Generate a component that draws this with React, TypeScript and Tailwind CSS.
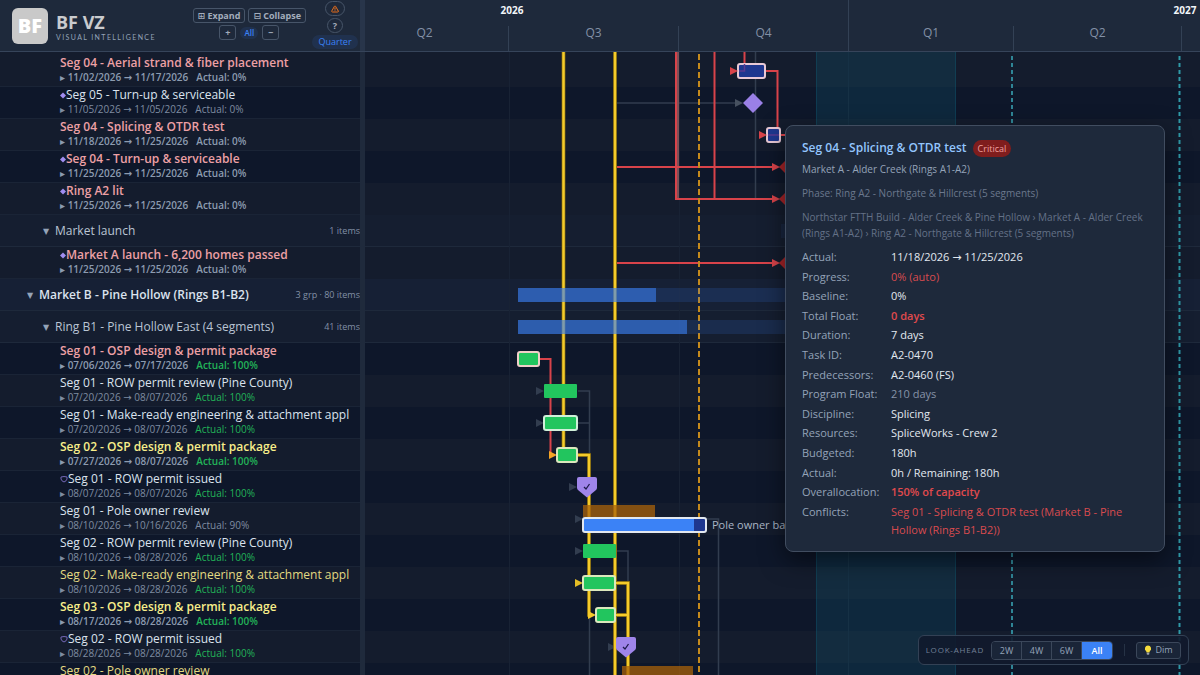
import clsx from 'clsx';
import { TriangleAlert } from 'lucide-react';

type Tone = 'critical' | 'normal' | 'driving' | 'drivingSoft';

interface TaskRow {
    kind: 'task';
    name: string;
    start: string;
    end: string;
    actual: number;
    tone?: Tone;
    mark?: 'milestone' | 'permit';
}

interface GroupRow {
    kind: 'group';
    name: string;
    count: string;
    level: 1 | 2;
}

type Row = TaskRow | GroupRow;

const rows: Row[] = [
    { kind: 'task', name: 'Seg 04 - Aerial strand & fiber placement', start: '11/02/2026', end: '11/17/2026', actual: 0, tone: 'critical' },
    { kind: 'task', name: 'Seg 05 - Turn-up & serviceable', start: '11/05/2026', end: '11/05/2026', actual: 0, mark: 'milestone' },
    { kind: 'task', name: 'Seg 04 - Splicing & OTDR test', start: '11/18/2026', end: '11/25/2026', actual: 0, tone: 'critical' },
    { kind: 'task', name: 'Seg 04 - Turn-up & serviceable', start: '11/25/2026', end: '11/25/2026', actual: 0, tone: 'critical', mark: 'milestone' },
    { kind: 'task', name: 'Ring A2 lit', start: '11/25/2026', end: '11/25/2026', actual: 0, tone: 'critical', mark: 'milestone' },
    { kind: 'group', name: 'Market launch', count: '1 items', level: 2 },
    { kind: 'task', name: 'Market A launch - 6,200 homes passed', start: '11/25/2026', end: '11/25/2026', actual: 0, tone: 'critical', mark: 'milestone' },
    { kind: 'group', name: 'Market B - Pine Hollow (Rings B1-B2)', count: '3 grp · 80 items', level: 1 },
    { kind: 'group', name: 'Ring B1 - Pine Hollow East (4 segments)', count: '41 items', level: 2 },
    { kind: 'task', name: 'Seg 01 - OSP design & permit package', start: '07/06/2026', end: '07/17/2026', actual: 100, tone: 'critical' },
    { kind: 'task', name: 'Seg 01 - ROW permit review (Pine County)', start: '07/20/2026', end: '08/07/2026', actual: 100 },
    { kind: 'task', name: 'Seg 01 - Make-ready engineering & attachment application', start: '07/20/2026', end: '08/07/2026', actual: 100 },
    { kind: 'task', name: 'Seg 02 - OSP design & permit package', start: '07/27/2026', end: '08/07/2026', actual: 100, tone: 'driving' },
    { kind: 'task', name: 'Seg 01 - ROW permit issued', start: '08/07/2026', end: '08/07/2026', actual: 100, mark: 'permit' },
    { kind: 'task', name: 'Seg 01 - Pole owner review', start: '08/10/2026', end: '10/16/2026', actual: 90 },
    { kind: 'task', name: 'Seg 02 - ROW permit review (Pine County)', start: '08/10/2026', end: '08/28/2026', actual: 100 },
    { kind: 'task', name: 'Seg 02 - Make-ready engineering & attachment application', start: '08/10/2026', end: '08/28/2026', actual: 100, tone: 'drivingSoft' },
    { kind: 'task', name: 'Seg 03 - OSP design & permit package', start: '08/17/2026', end: '08/28/2026', actual: 100, tone: 'driving' },
    { kind: 'task', name: 'Seg 02 - ROW permit issued', start: '08/28/2026', end: '08/28/2026', actual: 100, mark: 'permit' },
    { kind: 'task', name: 'Seg 02 - Pole owner review', start: '08/31/2026', end: '10/30/2026', actual: 0, tone: 'drivingSoft' },
];

const toneClass: Record<Tone, string> = {
    critical: 'font-semibold text-[#eda0a5]',
    normal: 'text-[#dbe3ee]',
    driving: 'font-semibold text-[#f8ee8a]',
    drivingSoft: 'text-[#e3da82]',
};

// Striping carries on across both the list and the chart
function rowFill(row: Row, i: number) {
    if (row.kind === 'group') return row.level === 1 ? '#162035' : '#151e30';
    return i % 2 === 0 ? '#141c2d' : '#0e172a';
}

function Toolbar() {
    const btn = 'flex h-[15px] items-center justify-center rounded-[3px] border border-[#475569] text-[9px] font-bold leading-3 text-[#a3adbc]';
    return (
        <div className="flex items-start gap-2">
            <div className="flex flex-col items-center gap-[2px] pt-2">
                <div className="flex gap-[3px]">
                    <button className={clsx(btn, 'px-1')}>⊞ Expand</button>
                    <button className={clsx(btn, 'px-1')}>⊟ Collapse</button>
                </div>
                <div className="flex items-center gap-1">
                    <button className={clsx(btn, 'w-[17px]')}>+</button>
                    <button className="rounded-full bg-[#3b82f61a] px-1 text-[8px] font-semibold leading-3 text-[#3b82f6]">All</button>
                    <button className={clsx(btn, 'w-[17px]')}>−</button>
                </div>
            </div>
            <div className="flex w-[42px] flex-col items-center gap-[2px] pt-px">
                <button aria-label="Warnings" className="flex h-[15px] w-5 items-center justify-center rounded-full border border-[#475569] text-[#e86f1c]">
                    <TriangleAlert size={8} strokeWidth={3} />
                </button>
                <button className="flex h-[15px] w-4 items-center justify-center rounded-full border border-[#475569] text-[9px] font-bold text-[#a3adbc]">?</button>
                <button className="rounded-full bg-[#3b82f61a] px-[6px] text-[9px] leading-[14px] text-[#3b82f6]">Quarter</button>
            </div>
        </div>
    );
}

function Brand() {
    return (
        <div className="flex w-[365px] shrink-0 justify-between border-r-[5px] border-[#28354a] pl-3 pr-1">
            <div className="flex items-center gap-2">
                <div className="flex size-9 items-center justify-center rounded-md bg-[#c9c9c9] text-xl font-extrabold leading-none text-white">BF</div>
                <div className="flex flex-col pt-0.5">
                    <span className="text-lg font-bold leading-5 text-[#c9cbce]">BF VZ</span>
                    <span className="font-[Lato] text-[7px] leading-[10px] tracking-[0.2em] text-[#94a3b8]">VISUAL INTELLIGENCE</span>
                </div>
            </div>
            <Toolbar />
        </div>
    );
}

function Timeline() {
    const years = [
        { label: '2026', quarters: [['Q1', 'w-[165px]'], ['Q2', 'w-[168px]'], ['Q3', 'w-[170px]'], ['Q4', 'w-[169px]']] },
        { label: '2027', quarters: [['Q1', 'w-[165px]'], ['Q2', 'w-[168px]'], ['Q3', 'w-[170px]'], ['Q4', 'w-[169px]']] },
    ];
    return (
        <div className="min-w-0 flex-1 overflow-hidden">
            <div className="-ml-[189px] flex h-full">
                {years.map((y) => (
                    <div key={y.label} className="flex shrink-0 flex-col border-r border-[#334155]">
                        <div className="h-[26px] pt-0.5 text-center text-[10px] font-bold leading-4 text-[#f1f5f9]">{y.label}</div>
                        <div className="flex flex-1">
                            {y.quarters.map(([q, w]) => (
                                <div key={q} className={clsx(w, 'border-r border-[#334155] pb-3 text-center text-xs leading-[13px] text-[#8290a6] last:border-r-0')}>
                                    {q}
                                </div>
                            ))}
                        </div>
                    </div>
                ))}
            </div>
        </div>
    );
}

function RowMark({ mark }: { mark: 'milestone' | 'permit' }) {
    if (mark === 'milestone') {
        return (
            <svg width="6" height="8" viewBox="0 0 6 8" className="shrink-0">
                <path d="M3 1.5L6 4.5L3 7.5L0 4.5Z" fill="#a08df0" />
            </svg>
        );
    }
    return (
        <svg width="8" height="8" viewBox="0 0 8 8" className="shrink-0">
            <path d="M1 2Q4 1 7 2V4Q6.6 6 4 7Q1.4 6 1 4Z" fill="none" stroke="#7468b8" />
        </svg>
    );
}

function ListRow({ row, index }: { row: Row; index: number }) {
    if (row.kind === 'group') {
        return (
            <li
                className={clsx('flex h-8 items-center border-b border-[#1e293b]', row.level === 1 ? 'pl-[27px]' : 'pl-[43px]')}
                style={{ backgroundColor: rowFill(row, index) }}
            >
                <span className="w-3 text-[8px] leading-3 text-[#94a3b8]">▼</span>
                <span className={clsx('flex-1 text-xs leading-4', row.level === 1 ? 'font-semibold text-[#dbe3ee]' : 'text-[#bac5d4]')}>{row.name}</span>
                <span className="text-[9px] text-[#8290a6]">{row.count}</span>
            </li>
        );
    }
    const tone = row.tone ?? 'normal';
    const strong = tone === 'critical' || tone === 'driving';
    return (
        <li className="h-8 border-b border-[#1a2436] pl-[60px] pr-[11px]" style={{ backgroundColor: rowFill(row, index) }}>
            <div className={clsx('flex h-4 items-center overflow-hidden whitespace-nowrap text-xs leading-4', toneClass[tone])}>
                {row.mark && <RowMark mark={row.mark} />}
                <span>{row.name}</span>
            </div>
            <div className={clsx('flex h-[13px] gap-2 text-[10px] leading-[13px]', strong ? 'font-semibold text-[#8c9bb0]' : 'text-[#7f8ca1]')}>
                <span>
                    ▸ {row.start} → {row.end}
                </span>
                <span className={clsx(row.actual === 100 && 'text-[#22b358]')}>Actual: {row.actual}%</span>
            </div>
        </li>
    );
}

function Arrow({ x, y, color }: { x: number; y: number; color: string }) {
    return <path d={`M${x - 8} ${y - 4}L${x} ${y}L${x - 8} ${y + 4}Z`} fill={color} />;
}

function Bar({ x, y, w, stroke, fill = '#22c55e' }: { x: number; y: number; w: number; stroke?: string; fill?: string }) {
    if (!stroke) return <rect x={x} y={y - 7} width={w} height={14} rx={1} fill={fill} />;
    return <rect x={x} y={y - 7} width={w} height={14} rx={2} fill={fill} stroke={stroke} strokeWidth={2} />;
}

function Permit({ x, y }: { x: number; y: number }) {
    return (
        <g>
            <path d={`M${x - 8} ${y - 10}h16q2 0 2 2v8.5q0 1.5-1 2.5l-9 7.5l-9-7.5q-1-1-1-2.5v-8.5q0-2 2-2Z`} fill="#9f85ea" />
            <path d={`M${x - 3} ${y}l2 2l3.5-5`} fill="none" stroke="#1e1b4b" strokeWidth={1.3} />
        </g>
    );
}

function Chart() {
    const red = '#d8434a';
    const grey = '#323d4f';
    return (
        <svg className="block h-full w-full" role="img" aria-label="Schedule chart">
            {/* the drawing uses window coordinates, shifted back past the list and the header */}
            <g transform="translate(-365 -52)">
                <rect x={365} y={52} width="100%" height={3} fill="#141c2d" />
                {rows.map((row, i) => (
                    <g key={i}>
                        <rect x={365} y={55 + i * 32} width="100%" height={32} fill={rowFill(row, i)} />
                        {row.kind === 'group' && <rect x={365} y={86 + i * 32} width="100%" height={1} fill="#1e293b" />}
                    </g>
                ))}

                {[509, 679, 848].map((x) => (
                    <path key={x} d={`M${x}.5 52V675`} stroke="#182234" />
                ))}
                <rect x={816} y={52} width={140} height={640} fill="#0e7490" opacity={0.19} />
                <path d="M816.5 52V692M955.5 52V692" stroke="#0e7490" opacity={0.25} />

                {/* normal links */}
                <g fill="none" stroke={grey} strokeWidth={1.5}>
                    <path d="M755.5 52V199" />
                    <path d="M617 103H737" />
                    <path d="M578 391H589.5V482M578 423H589.5" />
                    <path d="M589.5 615V692" />
                    <path d="M707 519H718.5V692" />
                    <path d="M616 551H628V583" />
                </g>
                <Arrow x={743} y={103} color="#475160" />
                <Arrow x={544} y={391} color={grey} />
                <Arrow x={544} y={423} color={grey} />
                <Arrow x={577} y={487} color={grey} />
                <Arrow x={583} y={519} color={grey} />
                <Arrow x={583} y={551} color={grey} />
                <Arrow x={616} y={647} color={grey} />

                {/* critical links */}
                <path d="M678 52V198" stroke="#7d5058" strokeWidth={2} />
                <g fill="none" stroke={red} strokeWidth={2}>
                    <path d="M676 52V199H774" />
                    <path d="M714.5 52V199" />
                    <path d="M766 71H777.5V135" />
                    <path d="M615 167H774M615 263H774M780 135H800" />
                    <path d="M539 359H550.5V455" />
                </g>

                {/* driving path */}
                {['M563.5 52V455', 'M615 52V692', 'M578 455H589V615H592', 'M616 583H628V692M616 615H628'].map((d) => (
                    <g key={d} fill="none">
                        <path d={d} stroke="#6b5711" strokeWidth={4} />
                        <path d={d} stroke="#f5cb2a" strokeWidth={2.5} />
                    </g>
                ))}
                <Arrow x={557} y={455} color="#f5a524" />
                <Arrow x={583} y={583} color="#e5bd25" />
                <Arrow x={596} y={615} color="#f5cb2a" />

                <path d="M699 54V692" stroke="#c58a1c" strokeWidth={2} strokeDasharray="6 3" />
                <path d="M1012 56V692" stroke="#2f8596" strokeWidth={2} strokeDasharray="4 3" />
                <path d="M1179.5 56V692" stroke="#2f9aa8" strokeWidth={2} strokeDasharray="4 3" />

                {/* group summaries */}
                <rect x={781} y={224} width={60} height={14} fill="#3b82f6" opacity={0.08} />
                <rect x={518} y={288} width={400} height={14} fill="#3b82f6" opacity={0.15} />
                <rect x={518} y={288} width={138} height={14} fill="#3b82f6" opacity={0.57} />
                <rect x={518} y={320} width={400} height={14} fill="#3b82f6" opacity={0.15} />
                <rect x={518} y={320} width={169} height={14} fill="#3b82f6" opacity={0.57} />

                <Bar x={738} y={71} w={27} fill="#1e378f" stroke="#e8c9d6" />
                <Bar x={767} y={135} w={13} fill="#1e378f" stroke="#e8c9d6" />
                <path d="M744.5 52V63" stroke={red} strokeWidth={2} />
                <path d="M744.5 64V71H739M768 135H779" fill="none" stroke="#5a3a90" strokeWidth={1.5} />
                <Arrow x={738} y={71} color={red} />
                <Arrow x={767} y={135} color={red} />
                <path d="M753 93L763 103L753 113L743 103Z" fill="#9a80e6" />
                {[167, 199, 263].map((y) => (
                    <g key={y}>
                        <path d={`M788 ${y - 9}L797 ${y}L788 ${y + 9}L779 ${y}Z`} fill="#a82428" />
                        <Arrow x={780} y={y} color={red} />
                    </g>
                ))}

                <Bar x={518} y={359} w={21} stroke="#f0cfc8" />
                <Bar x={544} y={391} w={33} />
                <Bar x={544} y={423} w={33} stroke="#d0f0da" />
                <Bar x={557} y={455} w={20} stroke="#dce8bd" />
                <Permit x={587} y={487} />
                <rect x={583} y={505} width={72} height={12} fill="#a8620a" opacity={0.75} />
                <rect x={583} y={518} width={123} height={14} rx={2} fill="#1e378f" />
                <rect x={583} y={518} width={111} height={14} fill="#3b82f6" />
                <rect x={583} y={518} width={123} height={14} rx={2} fill="none" stroke="#e2e8f0" strokeWidth={2} />
                <text x={712} y={529} className="fill-[#aab6c6] text-[11px]">
                    Pole owner backlog
                </text>
                <Bar x={583} y={551} w={33} />
                <Bar x={583} y={583} w={32} stroke="#dce8bd" />
                <Bar x={596} y={615} w={19} stroke="#dce8bd" />
                <Permit x={626} y={647} />
                <rect x={622} y={666} width={71} height={12} fill="#a8620a" opacity={0.75} />
            </g>
        </svg>
    );
}

const details: { label: string; value: string; className?: string }[] = [
    { label: 'Actual', value: '11/18/2026 → 11/25/2026' },
    { label: 'Progress', value: '0% (auto)', className: 'text-[#d94b4f]' },
    { label: 'Baseline', value: '0%' },
    { label: 'Total Float', value: '0 days', className: 'font-semibold text-[#e04a4d]' },
    { label: 'Duration', value: '7 days' },
    { label: 'Task ID', value: 'A2-0470' },
    { label: 'Predecessors', value: 'A2-0460 (FS)' },
    { label: 'Program Float', value: '210 days', className: 'text-[#8693a8]' },
    { label: 'Discipline', value: 'Splicing' },
    { label: 'Resources', value: 'SpliceWorks - Crew 2' },
    { label: 'Budgeted', value: '180h' },
    { label: 'Actual', value: '0h / Remaining: 180h' },
    { label: 'Overallocation', value: '150% of capacity', className: 'font-semibold text-[#e04a4d]' },
    { label: 'Conflicts', value: 'Seg 01 - Splicing & OTDR test (Market B - Pine Hollow (Rings B1-B2))', className: 'text-[#d94b4f]' },
];

function TaskTooltip() {
    return (
        <div
            role="tooltip"
            className="absolute left-[420px] top-[73px] w-[380px] rounded-lg border border-[#414d60] bg-[#1e293b] px-4 py-3 shadow-[0_8px_24px_rgba(0,0,0,0.5)]"
        >
            <div className="flex items-center gap-[6px]">
                <h2 className="text-xs font-semibold leading-5 text-[#93c5fd]">Seg 04 - Splicing & OTDR test</h2>
                <span className="rounded-full bg-[#7f1d1d] px-[5px] text-[9px] leading-[17px] text-[#f0a0a0]">Critical</span>
            </div>
            <p className="mt-[3px] text-[10px] leading-4 text-[#94a3b8]">Market A - Alder Creek (Rings A1-A2)</p>
            <p className="mt-2 text-[10px] leading-4 text-[#6b788d]">Phase: Ring A2 - Northgate & Hillcrest (5 segments)</p>
            <p className="mt-2 text-[10px] leading-4 text-[#647187]">
                Northstar FTTH Build - Alder Creek & Pine Hollow › Market A - Alder Creek (Rings A1-A2) › Ring A2 - Northgate & Hillcrest (5 segments)
            </p>
            <dl className="mt-[7px] grid min-h-[291px] grid-cols-[89px_1fr] content-between text-[11px] leading-[18px]">
                {details.map((d, i) => (
                    <div key={i} className="col-span-2 grid grid-cols-subgrid">
                        <dt className="text-[#94a3b8]">{d.label}:</dt>
                        <dd className={d.className ?? 'text-[#e2e8f0]'}>{d.value}</dd>
                    </div>
                ))}
            </dl>
        </div>
    );
}

function LookAhead() {
    return (
        <div className="absolute bottom-[10px] right-[11px] flex items-center rounded-md border border-[#334155] bg-[#111a2ce6] px-[7px] py-1">
            <span className="text-[8px] leading-5 tracking-widest text-[#718096]">LOOK-AHEAD</span>
            <div className="ml-[7px] flex overflow-hidden rounded-[4px] border border-[#3b475a] text-[9px] leading-[17px]">
                {['2W', '4W', '6W', 'All'].map((r) => (
                    <button
                        key={r}
                        className={clsx(
                            'w-[30px] border-r border-[#3b475a] last:border-r-0',
                            r === 'All' ? 'bg-[#3b82f6] font-semibold text-white' : 'bg-[#1a2538] text-[#94a3b8]',
                        )}
                    >
                        {r}
                    </button>
                ))}
            </div>
            <span className="mx-[11px] h-3 w-px bg-[#263245]" />
            <button className="flex h-[17px] w-[45px] items-center justify-center gap-[3px] rounded-[3px] border border-[#3b475a] bg-[#1a2538] text-[9px] text-[#94a3b8]">
                <svg width="8" height="10" viewBox="0 0 8 10">
                    <path d="M4 0.5A3.2 3.2 0 0 0 2.2 6.3L2.6 7.5H5.4L5.8 6.3A3.2 3.2 0 0 0 4 .5Z" fill="#f6dc3c" />
                    <path d="M2.7 7.7H5.3V9.2L4.6 9.8H3.4L2.7 9.2Z" fill="#9ca3af" />
                </svg>
                Dim
            </button>
        </div>
    );
}

export default function App() {
    return (
        <div className="flex h-screen flex-col overflow-hidden bg-[#0f172a] font-['Open_Sans','DejaVu_Sans',sans-serif]">
            <header className="flex h-[52px] shrink-0 border-b border-[#36445a] bg-[#1e293b]">
                <Brand />
                <Timeline />
            </header>
            <main className="flex min-h-0 flex-1">
                <ul className="w-[365px] shrink-0 overflow-hidden border-r-[5px] border-[#1f2a3c] bg-[#141c2d] pt-[3px]">
                    {rows.map((row, i) => (
                        <ListRow key={i} row={row} index={i} />
                    ))}
                </ul>
                <section className="relative min-w-0 flex-1">
                    <Chart />
                    <TaskTooltip />
                    <LookAhead />
                </section>
            </main>
        </div>
    );
}
